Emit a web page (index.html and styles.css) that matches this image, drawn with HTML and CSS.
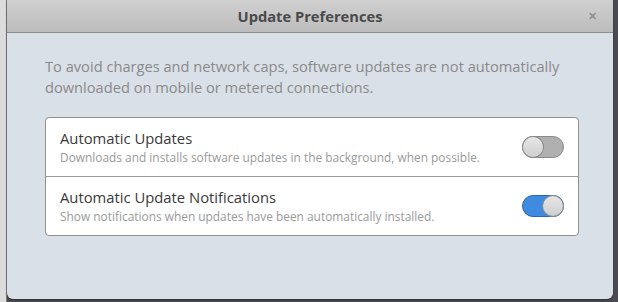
FILE: index.html
```html
<!DOCTYPE html>
<html lang="en">

<head>
    <meta charset="UTF-8">
    <meta name="viewport" content="width=device-width, initial-scale=1.0">
    <title>Update Preferences</title>
    <link rel="stylesheet" href="styles.css">
</head>

<body>
    <div class="desktop">
        <div class="dialog">
            <div class="titlebar">
                <span class="title">Update Preferences</span>
                <span class="close">&#x2715;</span>
            </div>
            <div class="content">
                <p class="intro">To avoid charges and network caps, software updates are not automatically
                    downloaded on mobile or metered connections.</p>
                <div class="list">
                    <div class="row">
                        <div class="labels">
                            <div class="row-title">Automatic Updates</div>
                            <div class="row-sub">Downloads and installs software updates in the background, when possible.</div>
                        </div>
                        <div class="switch"><div class="knob"></div></div>
                    </div>
                    <div class="row">
                        <div class="labels">
                            <div class="row-title">Automatic Update Notifications</div>
                            <div class="row-sub">Show notifications when updates have been automatically installed.</div>
                        </div>
                        <div class="switch on"><div class="knob"></div></div>
                    </div>
                </div>
            </div>
        </div>
    </div>
</body>

</html>
```

FILE: styles.css
```css
body {
    margin: 0;
    padding: 0;
    font-family: 'Open Sans', sans-serif;
    background-color: #4a4a52;
}

.desktop {
    width: 618px;
    height: 302px;
    background: linear-gradient(to right, #dcdcdc 0, #dcdcdc 6px, #7a7a7a 6px, #7a7a7a 7px, transparent 7px);
    overflow: hidden;
}

.dialog {
    margin-left: 7px;
    width: 606px;
    height: 299px;
    background-color: #d9e0e7;
    border-radius: 0 0 6px 6px;
    box-shadow: 0 1px 2px rgba(0, 0, 0, 0.4);
    display: flex;
    flex-direction: column;
}

.titlebar {
    height: 32px;
    border-bottom: 1px solid #8c8c8c;
    background: linear-gradient(#d0d0d0, #bcbcbc);
    display: flex;
    align-items: center;
    justify-content: center;
    position: relative;
}

.title {
    font-size: 14.7px;
    font-weight: bold;
    color: #4a4a4a;
}

.close {
    position: absolute;
    right: 16px;
    top: 8px;
    font-size: 11px;
    font-weight: bold;
    color: #909090;
}

.content {
    padding: 0 34px 0 38px;
}

.intro {
    margin: 23px 0 19px 0;
    font-size: 14.65px;
    line-height: 21px;
    color: #8a8a8a;
}

.list {
    background-color: #fff;
    border: 1px solid #8f8f8f;
    border-radius: 4px;
}

.row {
    height: 58px;
    display: flex;
    align-items: center;
    padding: 0 14px 0 14px;
}

.row + .row {
    border-top: 1px solid #9a9a9a;
}

.labels {
    flex: 1;
    padding-bottom: 1px;
}

.row-title {
    font-size: 14.8px;
    line-height: 18px;
    color: #3a3a3a;
}

.row-sub {
    margin-top: 2px;
    font-size: 11.9px;
    line-height: 16px;
    color: #9a9a9a;
}

.switch {
    width: 40px;
    height: 20px;
    border: 1px solid #8a8a8a;
    border-radius: 11px;
    background-color: #b0b0b0;
    display: flex;
    align-items: center;
}

.switch.on {
    background-color: #3f8be0;
    border-color: #2a66ad;
    justify-content: flex-end;
}

.knob {
    width: 20px;
    height: 20px;
    border-radius: 50%;
    background: linear-gradient(#e6e6e6, #cfcfcf);
    box-shadow: 0 0 0 1px #8a8a8a;
}
```
